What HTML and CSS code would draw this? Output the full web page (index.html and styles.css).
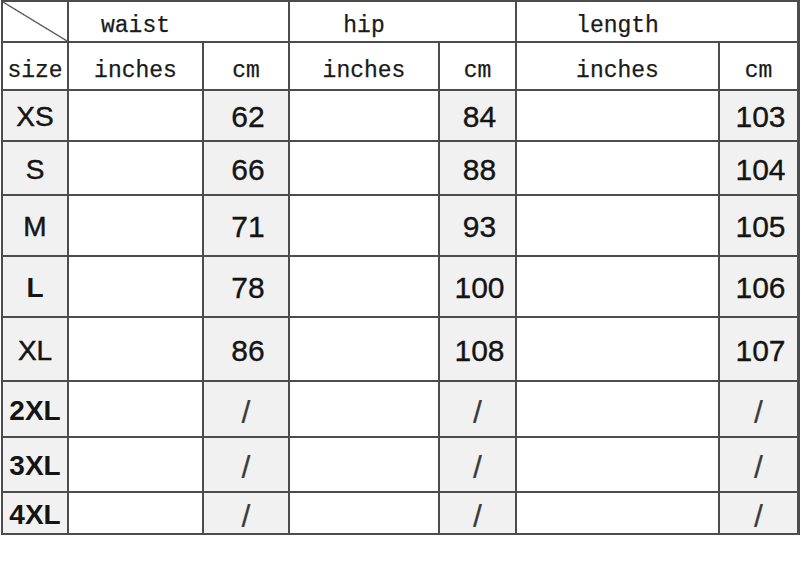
FILE: index.html
```html
<!DOCTYPE html>
<html lang="en">
<head>
<meta charset="utf-8">
<title>Size chart</title>
<link rel="stylesheet" href="styles.css">
</head>
<body>
<div class="chart">
  <div class="cell corner"></div>
  <div class="cell group g-waist"><span>waist</span></div>
  <div class="cell group g-hip"><span>hip</span></div>
  <div class="cell group g-length"><span>length</span></div>

  <div class="cell sub">size</div>
  <div class="cell sub">inches</div>
  <div class="cell sub">cm</div>
  <div class="cell sub">inches</div>
  <div class="cell sub">cm</div>
  <div class="cell sub">inches</div>
  <div class="cell sub">cm</div>

  <div class="cell size">XS</div><div class="cell"></div><div class="cell num">62</div><div class="cell"></div><div class="cell num">84</div><div class="cell"></div><div class="cell num">103</div>
  <div class="cell size">S</div><div class="cell"></div><div class="cell num">66</div><div class="cell"></div><div class="cell num">88</div><div class="cell"></div><div class="cell num">104</div>
  <div class="cell size">M</div><div class="cell"></div><div class="cell num">71</div><div class="cell"></div><div class="cell num">93</div><div class="cell"></div><div class="cell num">105</div>
  <div class="cell size bold">L</div><div class="cell"></div><div class="cell num">78</div><div class="cell"></div><div class="cell num">100</div><div class="cell"></div><div class="cell num">106</div>
  <div class="cell size">XL</div><div class="cell"></div><div class="cell num">86</div><div class="cell"></div><div class="cell num">108</div><div class="cell"></div><div class="cell num">107</div>
  <div class="cell size bold">2XL</div><div class="cell"></div><div class="cell num slash">/</div><div class="cell"></div><div class="cell num slash">/</div><div class="cell"></div><div class="cell num slash">/</div>
  <div class="cell size bold">3XL</div><div class="cell"></div><div class="cell num slash">/</div><div class="cell"></div><div class="cell num slash">/</div><div class="cell"></div><div class="cell num slash">/</div>
  <div class="cell size bold">4XL</div><div class="cell"></div><div class="cell num slash">/</div><div class="cell"></div><div class="cell num slash">/</div><div class="cell"></div><div class="cell num slash">/</div>
</div>
</body>
</html>
```

FILE: styles.css
```css
html, body {
  margin: 0;
  padding: 0;
  background: #ffffff;
}

.chart {
  margin-left: 1px;
  width: 795px;
  padding: 2px;
  background: #4c4c4c;
  display: grid;
  gap: 2px;
  grid-template-columns: 64px 133px 84px 148px 75px 201px 77px;
  grid-template-rows: 39px 46px 49px 52px 59px 59px 62px 54px 53px 40px;
}

.cell {
  background: #ffffff;
  display: flex;
  align-items: center;
  justify-content: center;
  color: #141414;
}

.corner {
  background: linear-gradient(to top right, #ffffff calc(50% - 1.2px), #444444 50%, #ffffff calc(50% + 1.2px));
}

.group {
  grid-column: span 2;
  font-family: "Liberation Mono", "DejaVu Sans Mono", monospace;
  font-size: 23px;
  color: #1a1a1a;
  -webkit-text-stroke: 0.25px #1a1a1a;
  padding-top: 9px;
}

.g-waist { padding-right: 86px; }
.g-hip { padding-right: 77px; }
.g-length { padding-right: 79px; }

.sub {
  font-family: "Liberation Mono", "DejaVu Sans Mono", monospace;
  font-size: 23px;
  color: #1a1a1a;
  -webkit-text-stroke: 0.25px #1a1a1a;
  padding-top: 10px;
}

.size {
  background: #f1f1f1;
  font-family: "Liberation Sans", Arial, sans-serif;
  font-size: 28px;
  -webkit-text-stroke: 0.45px #141414;
  padding-top: 3px;
}

.size.bold {
  font-weight: bold;
  -webkit-text-stroke: 0;
}

.num {
  background: #f1f1f1;
  font-family: "Liberation Sans", Arial, sans-serif;
  font-size: 30px;
  -webkit-text-stroke: 0.35px #141414;
  padding-left: 4px;
  padding-top: 3px;
}

.slash {
  font-size: 32px;
  color: #3c3c3c;
  -webkit-text-stroke: 0.2px #3c3c3c;
  padding-left: 0;
  padding-top: 6px;
}
```
